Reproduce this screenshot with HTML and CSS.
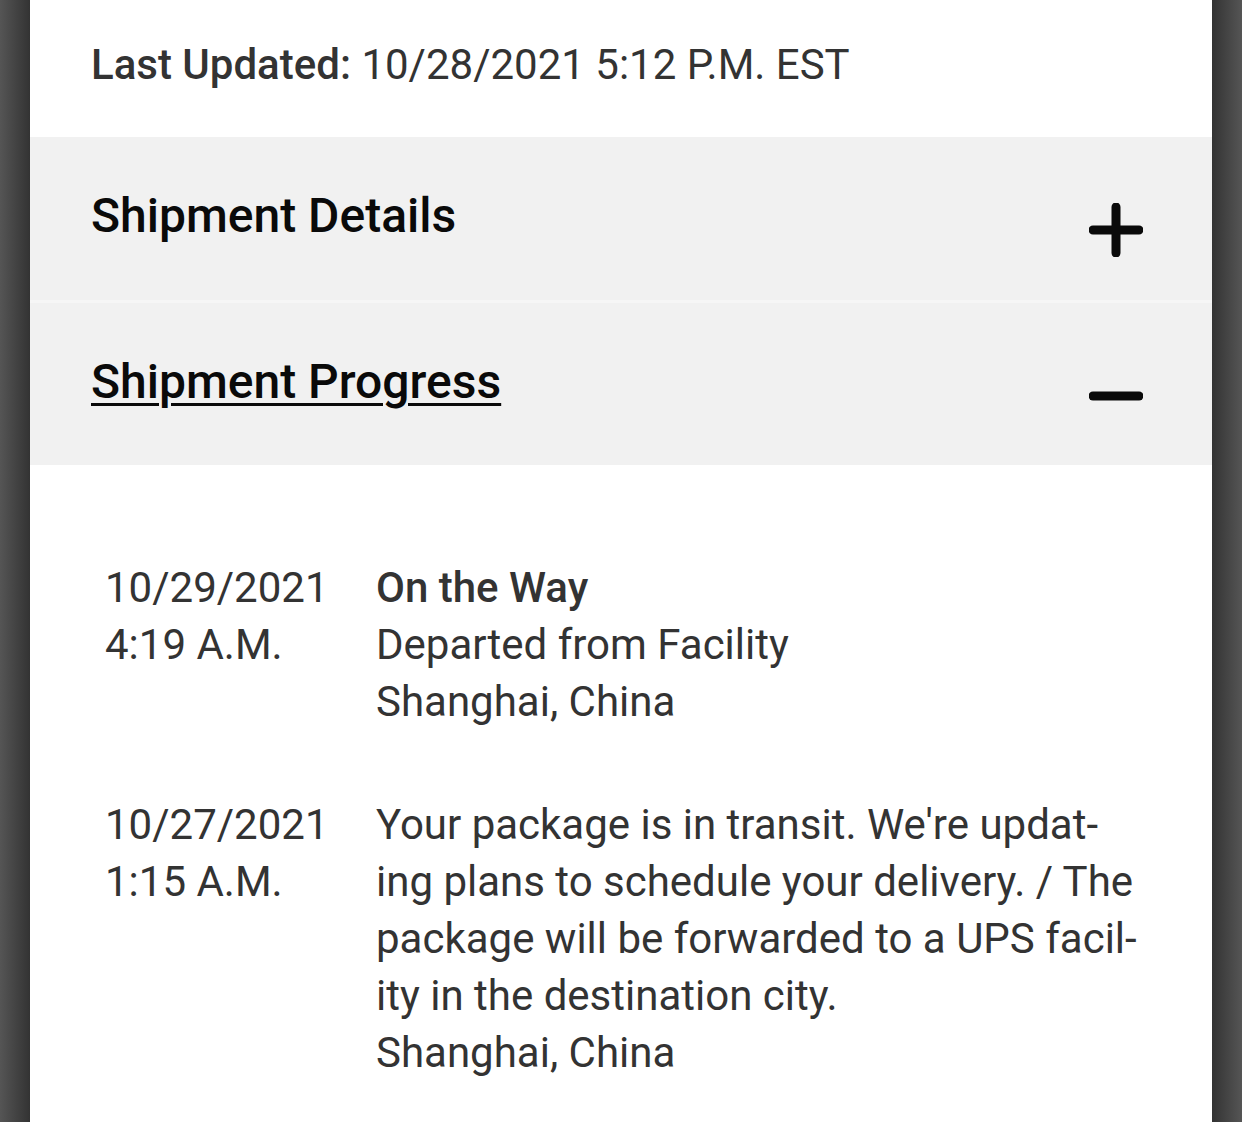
FILE: index.html
```html
<!DOCTYPE html>
<html lang="en">

<head>
    <meta charset="UTF-8">
    <meta name="viewport" content="width=device-width, initial-scale=1.0">
    <title>Track Package</title>
    <link rel="stylesheet" href="styles.css">
</head>

<body>

    <div class="screen">
        <div class="panel">

            <p class="last-updated"><strong>Last Updated:</strong> 10/28/2021 5:12 P.M. EST</p>

            <div class="section">
                <h2 class="section-title">Shipment Details</h2>
                <svg class="toggle" viewBox="0 0 54 54">
                    <path d="M27 4v46M4 27h46" stroke="#0a0a0a" stroke-width="9" stroke-linecap="round" fill="none"></path>
                </svg>
            </div>

            <div class="section">
                <h2 class="section-title active">Shipment Progress</h2>
                <svg class="toggle" viewBox="0 0 54 54">
                    <path d="M4 27h46" stroke="#0a0a0a" stroke-width="9" stroke-linecap="round" fill="none"></path>
                </svg>
            </div>

            <div class="progress">
                <div class="event">
                    <div class="event-date">10/29/2021<br>4:19 A.M.</div>
                    <div class="event-info">
                        <div class="event-status">On the Way</div>
                        <div>Departed from Facility</div>
                        <div>Shanghai, China</div>
                    </div>
                </div>

                <div class="event">
                    <div class="event-date">10/27/2021<br>1:15 A.M.</div>
                    <div class="event-info">
                        <div>Your package is in transit. We're updat&shy;ing plans to schedule your delivery. / The package will be forwarded to a UPS facil&shy;ity in the destination city.</div>
                        <div>Shanghai, China</div>
                    </div>
                </div>
            </div>

        </div>
    </div>

</body>

</html>
```

FILE: styles.css
```css
* {
    box-sizing: border-box;
}

body {
    margin: 0;
    font-family: Roboto, "Liberation Sans", sans-serif;
    color: #333333;
}

.screen {
    min-height: 100vh;
    padding: 0 30px;
    background: linear-gradient(to right, #555555 0, #333333 30px, transparent 30px),
        linear-gradient(to left, #555555 0, #333333 30px, #ffffff 30px);
}

.panel {
    min-height: 100vh;
    background-color: #ffffff;
}

.last-updated {
    margin: 0;
    height: 137px;
    padding: 36px 0 0 61px;
    font-size: 42px;
    line-height: 57px;
}

.last-updated strong {
    font-weight: 500;
}

.section {
    display: flex;
    justify-content: space-between;
    align-items: flex-start;
    height: 163px;
    padding: 50px 69px 0 61px;
    background-color: #f1f1f1;
}

.section + .section {
    border-top: 3px solid #f6f6f6;
    height: 165px;
}

.section-title {
    margin: 0;
    font-size: 48px;
    font-weight: 500;
    line-height: 57px;
    color: #0a0a0a;
}

.section-title.active {
    text-decoration: underline;
    text-decoration-thickness: 3px;
    text-underline-offset: 5px;
}

.toggle {
    width: 54px;
    height: 54px;
    margin-top: 16px;
}

.progress {
    display: flex;
    flex-direction: column;
    gap: 66px;
    padding: 94px 70px 40px 75px;
    font-size: 42px;
    line-height: 57px;
}

.event {
    display: grid;
    grid-template-columns: 271px 1fr;
}

.event-status {
    font-weight: 500;
}
```
